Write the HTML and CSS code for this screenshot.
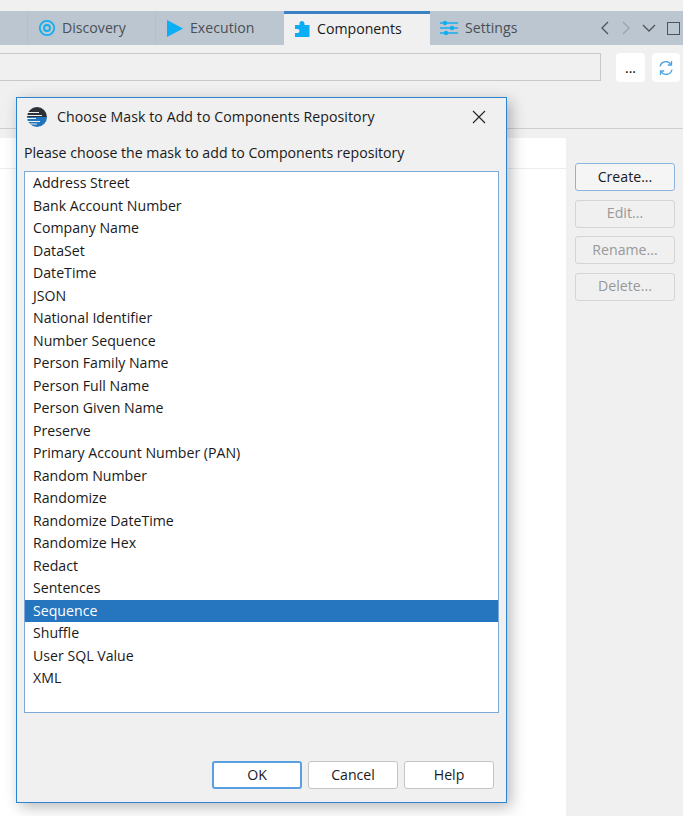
FILE: index.html
```html
<!DOCTYPE html>
<html lang="en">
<head>
  <meta charset="UTF-8">
  <title>Choose Mask</title>
  <link rel="stylesheet" href="styles.css">
</head>
<body>
  <header class="tabbar">
    <div class="tab tab-first">
      <svg class="tab-icon" width="18" height="18" viewBox="0 0 18 18"><circle cx="9" cy="9" r="7.2" fill="none" stroke="#12aef0" stroke-width="1.8"/><circle cx="9" cy="9" r="3" fill="none" stroke="#12aef0" stroke-width="1.8"/></svg>
      Discovery
    </div>
    <div class="tab tab-exec">
      <svg class="tab-icon" width="16" height="17" viewBox="0 0 16 17"><path d="M0 0L16 8.5L0 17Z" fill="#0badf5"/></svg>
      Execution
    </div>
    <div class="tab tab-active">
      <svg class="tab-icon" width="15" height="17" viewBox="0 0 15 17"><path d="M0 4H4.5V2.5A2.4 2.4 0 0 1 9.5 2.5V4H14.5V16H0V12H2.5A2 2 0 0 0 2.5 8H0Z" fill="#0badf5"/></svg>
      Components
    </div>
    <div class="tab tab-settings">
      <svg class="tab-icon" width="18" height="16" viewBox="0 0 18 16"><g stroke="#12aef0" stroke-width="1.5"><path d="M0 3H18M0 8H18M0 13H18"/></g><g fill="#12aef0"><circle cx="5" cy="3" r="2.2"/><circle cx="12" cy="8" r="2.2"/><circle cx="6" cy="13" r="2.2"/></g></svg>
      Settings
    </div>
    <div class="tab-controls">
      <svg width="10" height="14" viewBox="0 0 10 14"><path d="M8 1L2 7L8 13" fill="none" stroke="#4f5357" stroke-width="1.3"/></svg>
      <svg width="10" height="14" viewBox="0 0 10 14"><path d="M2 1L8 7L2 13" fill="none" stroke="#9aa3ab" stroke-width="1.3"/></svg>
      <svg width="14" height="10" viewBox="0 0 14 10"><path d="M1 2L7 8L13 2" fill="none" stroke="#4f5357" stroke-width="1.3"/></svg>
      <span class="ctl-box"></span>
    </div>
  </header>

  <div class="toolbar">
    <div class="path-field"></div>
    <button class="tool-btn">...</button>
    <button class="tool-btn tool-refresh">
      <svg width="16" height="16" viewBox="0 0 16 16" fill="none" stroke="#4ba3e3" stroke-width="1.3"><path d="M2 6.5A6 6 0 0 1 13 4.5"/><path d="M13.5 1V5H9.8"/><path d="M14 9.5A6 6 0 0 1 3 11.5"/><path d="M2.5 15V11H6.2"/></svg>
    </button>
  </div>

  <main class="workspace">
    <div class="table-area">
      <div class="table-head"></div>
      <div class="table-body"></div>
    </div>
    <aside class="side-buttons">
      <button class="side-btn side-btn-on">Create...</button>
      <button class="side-btn" disabled>Edit...</button>
      <button class="side-btn" disabled>Rename...</button>
      <button class="side-btn" disabled>Delete...</button>
    </aside>
  </main>

  <!-- Mask dialog -->
  <div class="dialog">
    <div class="dialog-title">
      <svg width="22" height="22" viewBox="0 0 22 22">
        <path d="M1 11A10 10 0 0 1 21 11Z" fill="#2c3138"/>
        <path d="M1 11A10 10 0 0 0 21 11Z" fill="#1f74bd"/>
        <g stroke="#f0f0f0" stroke-width="1.2"><path d="M0 6.5H13M0 9.5H16M0 12.5H10M0 15.5H14M0 18H11"/></g>
      </svg>
      <span class="dialog-name">Choose Mask to Add to Components Repository</span>
      <svg class="dialog-close" width="14" height="14" viewBox="0 0 14 14"><path d="M1 1L13 13M13 1L1 13" stroke="#222" stroke-width="1.1"/></svg>
    </div>
    <p class="dialog-msg">Please choose the mask to add to Components repository</p>
    <ul class="mask-list">
      <li>Address Street</li>
      <li>Bank Account Number</li>
      <li>Company Name</li>
      <li>DataSet</li>
      <li>DateTime</li>
      <li>JSON</li>
      <li>National Identifier</li>
      <li>Number Sequence</li>
      <li>Person Family Name</li>
      <li>Person Full Name</li>
      <li>Person Given Name</li>
      <li>Preserve</li>
      <li>Primary Account Number (PAN)</li>
      <li>Random Number</li>
      <li>Randomize</li>
      <li>Randomize DateTime</li>
      <li>Randomize Hex</li>
      <li>Redact</li>
      <li>Sentences</li>
      <li class="selected">Sequence</li>
      <li>Shuffle</li>
      <li>User SQL Value</li>
      <li>XML</li>
    </ul>
    <div class="dialog-actions">
      <button class="dlg-btn dlg-btn-default">OK</button>
      <button class="dlg-btn">Cancel</button>
      <button class="dlg-btn">Help</button>
    </div>
  </div>
</body>
</html>
```

FILE: styles.css
```css
body { background: #f0f0f0; color: #1a1a1a; font-family: "Open Sans", Arial, sans-serif; font-size: 14.15px; margin: 0; height: 816px; overflow: hidden; position: relative; }
button { font-family: inherit; font-size: 14.15px; }

/* Tab strip */
.tabbar { display: flex; align-items: stretch; height: 34px; margin-top: 11px; background: #bcc6d0; color: #4a4f55; }
.tab { display: flex; align-items: center; box-sizing: border-box; padding-bottom: 2px; }
.tab-icon { flex: none; margin-top: 2px; }
.tab-first { margin-left: 27px; width: 128px; padding-left: 10px; gap: 6px; border-left: 1px solid #b6c0ca; }
.tab-exec { width: 129px; padding-left: 11px; gap: 7px; border-left: 1px solid #b6c0ca; }
.tab-active { width: 146px; padding-left: 11px; gap: 7px; background: #f0f0f0; border-top: 3px solid #3b82c4; color: #1a1a1a; }
.tab-settings { padding-left: 10px; gap: 7px; }
.tab-controls { display: flex; align-items: center; margin-left: auto; padding-right: 3px; gap: 11px; }
.ctl-box { width: 11px; height: 11px; border: 1px solid #4f5357; }

/* Path row */
.toolbar { display: flex; align-items: flex-start; height: 75px; padding-top: 8px; border-bottom: 1px solid #cfcfcf; margin-bottom: 9px; }
.path-field { flex: none; width: 600px; height: 26px; border: 1px solid #c8c8c8; border-left: none; }
.tool-btn { width: 29px; height: 29px; margin-left: 15px; padding: 0; background: #fff; border: none; border-radius: 4px; }
.tool-refresh { margin-left: 7px; width: 28px; display: flex; align-items: center; justify-content: center; }

/* Table and side buttons */
.workspace { display: flex; height: 680px; }
.table-area { width: 566px; background: #fff; }
.table-head { height: 30px; border-bottom: 1px solid #ececec; }
.side-buttons { display: flex; flex-direction: column; gap: 8.5px; padding: 25px 0 0 9px; }
.side-btn { width: 100px; height: 28px; padding: 0 0 2px; background: #f0f0f0; color: #999; border: 1px solid #d4d4d4; border-radius: 3px; }
.side-btn-on { background: #f5f5f5; color: #1a1a1a; border-color: #8db4dc; }

/* Dialog */
.dialog { position: absolute; left: 16px; top: 97px; width: 489px; height: 704px; display: flex; flex-direction: column; background: #f0f0f0; border: 1px solid #2a84d2; box-shadow: 4px 4px 14px rgba(0, 0, 0, 0.28); }
.dialog-title { display: flex; align-items: center; height: 38px; padding: 0 20px 0 9px; flex: none; }
.dialog-name { margin-bottom: 2px; margin-left: 9px; letter-spacing: 0.07px; }
.dialog-close { margin-left: auto; }
.dialog-msg { margin: 0 0 0 7px; line-height: 19px; height: 27px; padding-top: 7px; box-sizing: border-box; }
.mask-list { list-style: none; margin: 8px 7px 0; padding: 0; height: 540px; background: #fff; border: 1px solid #7fa9d6; }
.mask-list li { height: 22.5px; line-height: 22.5px; padding-left: 8px; }
.mask-list .selected { background: #2675bf; color: #fff; }
.dialog-actions { display: flex; justify-content: flex-end; gap: 6px; margin-top: 48px; padding-right: 12px; }
.dlg-btn { width: 90px; height: 28px; padding: 0 0 2px; background: #fff; color: #1a1a1a; border: 1px solid #c4c4c4; border-radius: 3px; }
.dlg-btn-default { border: 2px solid #5aa0e0; }
```
